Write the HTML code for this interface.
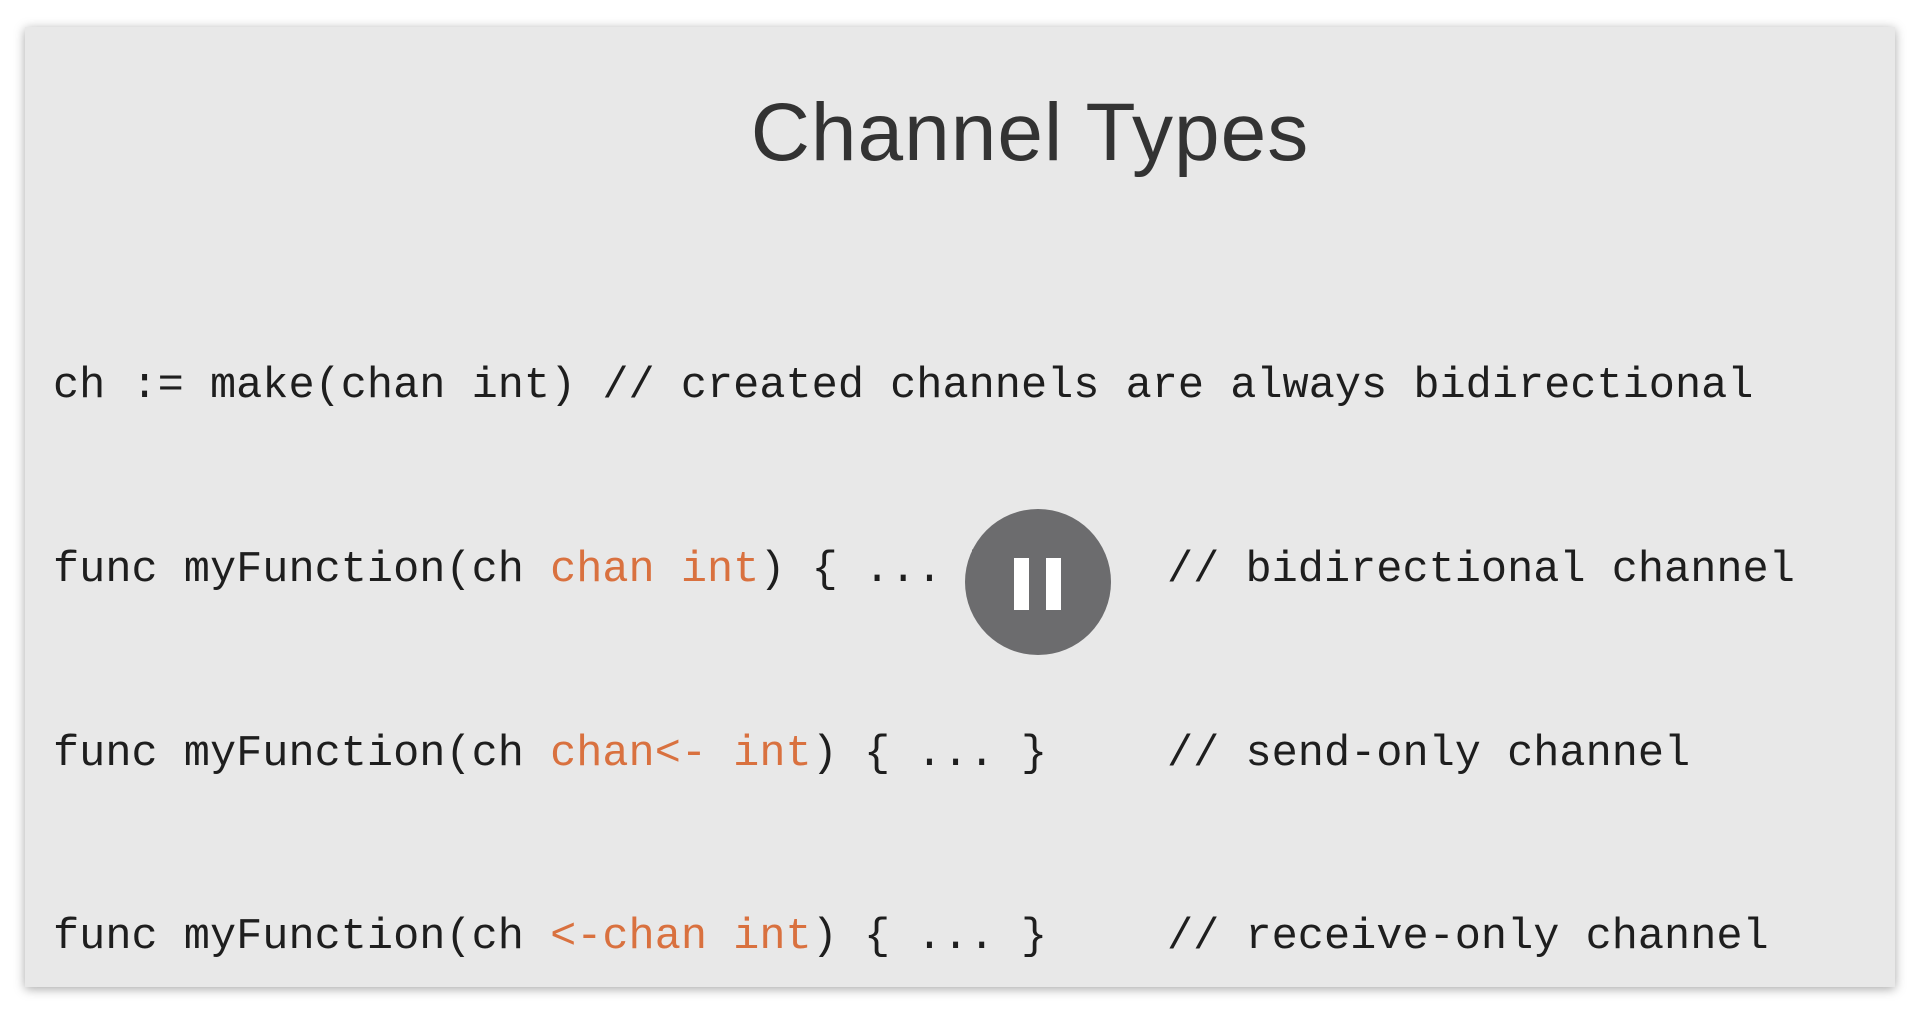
<!DOCTYPE html>
<html><head><meta charset="utf-8"><style>
html,body{margin:0;padding:0;width:1920px;height:1014px;background:#fff;overflow:hidden;position:relative;font-family:"Liberation Sans",sans-serif}
.card{position:absolute;left:25px;top:27px;width:1870px;height:960px;background:#e8e8e8;box-shadow:0 2px 10px rgba(0,0,0,.35)}
.title{position:absolute;left:70px;width:1920px;top:86px;text-align:center;font-size:82px;color:#333;letter-spacing:1px}
.l{position:absolute;left:53px;font-family:"Liberation Mono",monospace;font-size:43.6px;color:#1e1e1e;white-space:pre;line-height:1}
.c{position:absolute;left:1167px;font-family:"Liberation Mono",monospace;font-size:43.6px;color:#1e1e1e;white-space:pre;line-height:1}
.o{color:#d9713f}
.p{position:absolute;left:965px;top:509px;width:146px;height:146px;border-radius:50%;background:#6c6c6e}
.b{position:absolute;top:49px;width:15px;height:52px;background:#fff}
</style></head><body>
<div class="card"></div>
<div class="title">Channel Types</div>
<div class="l" style="top:365px">ch := make(chan int) // created channels are always bidirectional</div>
<div class="l" style="top:549px">func myFunction(ch <span class="o">chan int</span>) { ... }</div>
<div class="c" style="top:549px">// bidirectional channel</div>
<div class="l" style="top:733px">func myFunction(ch <span class="o">chan&lt;- int</span>) { ... }</div>
<div class="c" style="top:733px">// send-only channel</div>
<div class="l" style="top:916px">func myFunction(ch <span class="o">&lt;-chan int</span>) { ... }</div>
<div class="c" style="top:916px">// receive-only channel</div>
<div class="p"><div class="b" style="left:49px"></div><div class="b" style="left:81px"></div></div>
</body></html>
